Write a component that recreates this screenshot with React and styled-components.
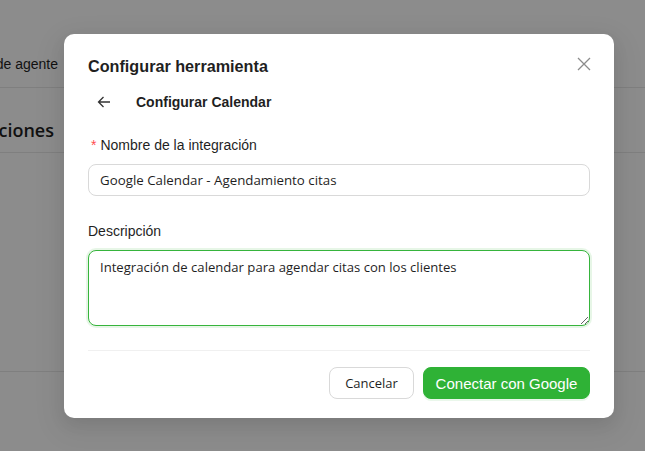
import React, { useState } from 'react';
import styled, { createGlobalStyle } from 'styled-components';

const GlobalStyle = createGlobalStyle`
  html, body {
    margin: 0;
    padding: 0;
    background: #ffffff;
  }
  body {
    font-family: "Liberation Sans", Arial, sans-serif;
    overflow: hidden;
  }
`;

const Page = styled.div`
  position: relative;
  width: 645px;
  height: 451px;
  background: #ffffff;
  overflow: hidden;
`;

const TopBar = styled.div`
  height: 88px;
  border-bottom: 1px solid #e8e8e8;
  display: flex;
  align-items: flex-start;
  padding-top: 54px;
  box-sizing: border-box;
`;

const TabClip = styled.div`
  width: 58px;
  overflow: hidden;
  display: flex;
  justify-content: flex-end;
`;

const TabText = styled.span`
  white-space: nowrap;
  font-size: 14px;
  line-height: 20px;
  color: #1f1f1f;
`;

const SectionHead = styled.div`
  height: 65px;
  border-bottom: 1px solid #e8e8e8;
  display: flex;
  align-items: flex-start;
  padding-top: 30px;
  box-sizing: border-box;
`;

const SectionClip = styled.div`
  width: 54px;
  overflow: hidden;
  display: flex;
  justify-content: flex-end;
`;

const SectionTitle = styled.h2`
  margin: 0;
  white-space: nowrap;
  font-family: "Open Sans", sans-serif;
  font-size: 18px;
  line-height: 24px;
  font-weight: 600;
  color: #1f1f1f;
`;

const SectionBody = styled.div`
  height: 218px;
  border-bottom: 1px solid #e8e8e8;
`;

const Overlay = styled.div`
  position: absolute;
  inset: 0;
  background: rgba(0, 0, 0, 0.45);
  padding: 34px 0 0 64px;
  box-sizing: border-box;
`;

const Modal = styled.div`
  position: relative;
  width: 550px;
  background: #ffffff;
  border-radius: 10px;
  box-shadow: 0 6px 16px rgba(0, 0, 0, 0.08), 0 9px 28px 8px rgba(0, 0, 0, 0.05);
  padding: 21px 24px 19px;
  box-sizing: border-box;
`;

const Title = styled.div`
  font-size: 16.2px;
  font-weight: 700;
  line-height: 22px;
  color: #1f1f1f;
`;

const CloseButton = styled.button`
  position: absolute;
  top: 16px;
  right: 16px;
  width: 28px;
  height: 28px;
  border: none;
  background: transparent;
  display: flex;
  align-items: center;
  justify-content: center;
  padding: 0;
  cursor: pointer;
`;

const BackRow = styled.div`
  display: flex;
  align-items: center;
  gap: 16px;
  height: 32px;
  margin-top: 9px;
`;

const BackButton = styled.button`
  width: 32px;
  height: 32px;
  border: none;
  background: transparent;
  display: flex;
  align-items: center;
  justify-content: center;
  padding: 0;
  cursor: pointer;
`;

const SubTitle = styled.div`
  font-size: 14px;
  font-weight: 700;
  color: #1f1f1f;
`;

const Form = styled.div`
  margin-top: 16px;
  display: flex;
  flex-direction: column;
  gap: 24px;
`;

const Field = styled.div`
  display: flex;
  flex-direction: column;
  gap: 8px;
`;

const Label = styled.label`
  font-size: 14px;
  line-height: 22px;
  color: #1f1f1f;
  display: flex;
  align-items: center;
`;

const Required = styled.span`
  color: #ff4d4f;
  font-family: SimSun, "Liberation Sans", sans-serif;
  font-size: 14px;
  margin: 0 4px 0 3px;
`;

const Input = styled.input`
  height: 32px;
  box-sizing: border-box;
  border: 1px solid #d9d9d9;
  border-radius: 8px;
  padding: 4px 11px;
  font-family: "Open Sans", sans-serif;
  font-size: 13.3px;
  color: #1f1f1f;
  outline: none;
`;

const TextArea = styled.textarea`
  height: 76px;
  box-sizing: border-box;
  border: 1px solid ${(p) => (p.$focused ? '#36b43c' : '#d9d9d9')};
  box-shadow: ${(p) => (p.$focused ? '0 0 0 2px rgba(54, 180, 60, 0.12)' : 'none')};
  border-radius: 8px;
  padding: 5px 11px;
  font-family: "Open Sans", sans-serif;
  font-size: 13.1px;
  line-height: 22px;
  color: #1f1f1f;
  outline: none;
  resize: vertical;
`;

const Divider = styled.div`
  height: 1px;
  background: #f0f0f0;
  margin-top: 24px;
`;

const Footer = styled.div`
  display: flex;
  justify-content: flex-end;
  gap: 9px;
  margin-top: 16px;
`;

const Button = styled.button`
  height: 32px;
  border-radius: 8px;
  padding: 0;
  font-size: 14px;
  white-space: nowrap;
  cursor: pointer;
  box-sizing: border-box;
`;

const CancelButton = styled(Button)`
  width: 85px;
  background: #ffffff;
  border: 1px solid #d9d9d9;
  color: #1f1f1f;
  font-family: "Open Sans", sans-serif;
  font-size: 13px;
`;

const PrimaryButton = styled(Button)`
  width: 167px;
  background: #2fb236;
  border: 1px solid #2fb236;
  color: #ffffff;
  font-family: "Liberation Sans", Arial, sans-serif;
  font-size: 15px;
  box-shadow: 0 2px 0 rgba(47, 178, 54, 0.1);
`;

const App = () => {
  const [name, setName] = useState('Google Calendar - Agendamiento citas');
  const [desc, setDesc] = useState('Integración de calendar para agendar citas con los clientes');

  return (
    <Page>
      <GlobalStyle />
      <TopBar>
        <TabClip>
          <TabText>Configuración de agente</TabText>
        </TabClip>
      </TopBar>
      <SectionHead>
        <SectionClip>
          <SectionTitle>Integraciones</SectionTitle>
        </SectionClip>
      </SectionHead>
      <SectionBody />

      <Overlay>
        <Modal>
          <Title>Configurar herramienta</Title>
          <CloseButton aria-label="Cerrar">
            <svg width="14" height="14" viewBox="0 0 14 14">
              <path d="M1 1L13 13M13 1L1 13" stroke="#8c8c8c" strokeWidth="1.3" fill="none" />
            </svg>
          </CloseButton>

          <BackRow>
            <BackButton aria-label="Volver">
              <svg width="14" height="12" viewBox="0 0 14 12">
                <path d="M13 6H1.5M6.5 1L1.5 6L6.5 11" stroke="#333" strokeWidth="1.3" fill="none" />
              </svg>
            </BackButton>
            <SubTitle>Configurar Calendar</SubTitle>
          </BackRow>

          <Form>
            <Field>
              <Label>
                <Required>*</Required>Nombre de la integración
              </Label>
              <Input value={name} onChange={(e) => setName(e.target.value)} />
            </Field>
            <Field>
              <Label>Descripción</Label>
              <TextArea $focused value={desc} onChange={(e) => setDesc(e.target.value)} />
            </Field>
          </Form>

          <Divider />

          <Footer>
            <CancelButton>Cancelar</CancelButton>
            <PrimaryButton>Conectar con Google</PrimaryButton>
          </Footer>
        </Modal>
      </Overlay>
    </Page>
  );
};

export default App;
